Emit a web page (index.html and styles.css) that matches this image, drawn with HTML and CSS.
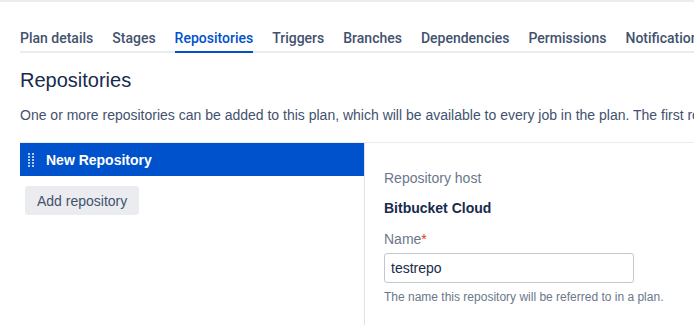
FILE: index.html
```html
<!DOCTYPE html>
<html lang="en">
<head>
    <meta charset="UTF-8">
    <title>Repositories</title>
    <link rel="stylesheet" href="styles.css">
</head>
<body>
    <div class="page">
        <ul class="tabs">
            <li>Plan details</li>
            <li>Stages</li>
            <li class="active">Repositories</li>
            <li>Triggers</li>
            <li>Branches</li>
            <li>Dependencies</li>
            <li>Permissions</li>
            <li>Notifications</li>
        </ul>

        <h1>Repositories</h1>
        <p class="intro">One or more repositories can be added to this plan, which will be available to every job in the plan. The first repository in the list is the plan's default repository.</p>

        <div class="panel">
            <div class="repo-list">
                <div class="repo-item">
                    <svg class="grip" width="8" height="14" viewBox="0 0 8 14">
                        <g fill="#b3c8ef">
                            <rect x="0" y="0" width="2" height="2"/><rect x="4" y="0" width="2" height="2"/>
                            <rect x="0" y="3" width="2" height="2"/><rect x="4" y="3" width="2" height="2"/>
                            <rect x="0" y="6" width="2" height="2"/><rect x="4" y="6" width="2" height="2"/>
                            <rect x="0" y="9" width="2" height="2"/><rect x="4" y="9" width="2" height="2"/>
                            <rect x="0" y="12" width="2" height="2"/><rect x="4" y="12" width="2" height="2"/>
                        </g>
                    </svg>
                    <span>New Repository</span>
                </div>
                <button class="btn">Add repository</button>
            </div>
            <div class="repo-form">
                <div class="label">Repository host</div>
                <div class="value">Bitbucket Cloud</div>
                <label class="label" for="name">Name<span class="req">*</span></label>
                <input id="name" class="text" type="text" value="testrepo">
                <div class="help">The name this repository will be referred to in a plan.</div>
            </div>
        </div>
    </div>
</body>
</html>
```

FILE: styles.css
```css
body {
    margin: 0;
    font-family: "Liberation Sans", Arial, sans-serif;
    font-size: 14px;
    line-height: 20px;
    color: #172b4d;
    background: #fff;
    border-top: 2px solid #ebecf0;
    overflow: hidden;
}
.page {
    padding: 0 0 0 20px;
    white-space: nowrap;
}
.tabs {
    display: flex;
    gap: 19px;
    list-style: none;
    margin: 26px 0 0;
    padding: 0;
    border-bottom: 2px solid #ebecf0;
}
.tabs li {
    font-family: Roboto, sans-serif;
    font-weight: 500;
    color: #42526e;
    padding-bottom: 3px;
    margin-bottom: -2px;
    border-bottom: 2px solid transparent;
}
.tabs li.active {
    color: #0052cc;
    border-bottom-color: #0052cc;
}
h1 {
    font-size: 20px;
    font-weight: normal;
    line-height: 24px;
    margin: 15px 0 0;
    color: #172b4d;
}
.intro {
    margin: 13px 0 0;
    color: #42526e;
}
.panel {
    display: flex;
    margin-top: 17px;
    border-top: 1px solid #ebecf0;
    height: 182px;
}
.repo-list {
    width: 344px;
    flex: none;
    border-right: 1px solid #dfe1e6;
}
.repo-item {
    display: flex;
    align-items: center;
    gap: 10px;
    height: 33px;
    padding-left: 8px;
    background: #0052cc;
    color: #fff;
    font-weight: bold;
}
.btn {
    margin: 10px 0 0 5px;
    height: 29px;
    padding: 0 12px;
    border: none;
    border-radius: 3px;
    background: #ebecf0;
    color: #42526e;
    font-family: inherit;
    font-size: 14px;
}
.repo-form {
    padding: 25px 0 0 19px;
}
.label {
    display: block;
    color: #6b778c;
}
.value {
    font-weight: bold;
    margin: 10px 0 11px;
}
.req {
    color: #de350b;
}
.text {
    display: block;
    box-sizing: border-box;
    width: 250px;
    height: 30px;
    margin-top: 4px;
    padding: 0 6px;
    border: 1px solid #c1c7d0;
    border-radius: 3px;
    font-family: inherit;
    font-size: 14px;
    color: #172b4d;
}
.help {
    margin-top: 6px;
    font-size: 12px;
    line-height: 16px;
    color: #6b778c;
}
```
